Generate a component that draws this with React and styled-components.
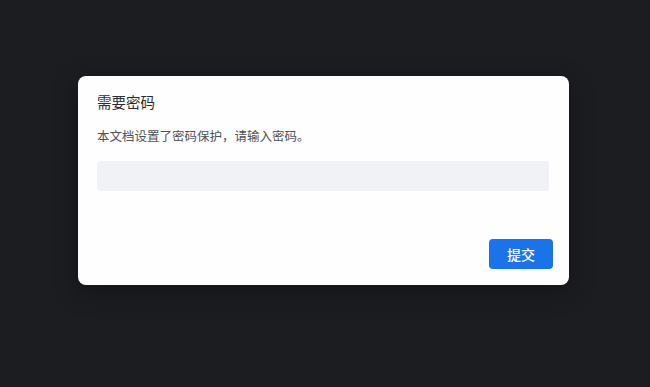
import React from "react";
import styled, { createGlobalStyle } from "styled-components";

const Global = createGlobalStyle`
  html, body { margin: 0; padding: 0; background: #1c1d21; }
  body { font-family: "Noto Sans CJK SC", "Noto Sans", sans-serif; }
`;

const Overlay = styled.div`
  width: 650px;
  height: 387px;
  background: #1c1d21;
  display: flex;
  justify-content: center;
  align-items: flex-start;
  padding-top: 76px;
  box-sizing: border-box;
`;

const Dialog = styled.div`
  width: 491px;
  height: 209px;
  margin-left: -3px;
  background: #fefefe;
  border-radius: 8px;
  box-shadow: 0 6px 24px rgba(0, 0, 0, 0.35);
  box-sizing: border-box;
  padding: 15px 16px 16px 19px;
  display: flex;
  flex-direction: column;
`;

const Title = styled.div`
  font-size: 14.5px;
  line-height: 22px;
  color: #2a2a30;
  font-weight: 400;
`;

const Desc = styled.div`
  margin-top: 13px;
  font-size: 12.5px;
  line-height: 20px;
  color: #505058;
`;

const Input = styled.input`
  margin-top: 15px;
  width: 452px;
  height: 30px;
  border: none;
  outline: none;
  border-radius: 4px;
  background: #f1f2f6;
  box-sizing: border-box;
  padding: 0 10px;
  font-size: 13px;
`;

const Footer = styled.div`
  margin-top: auto;
  display: flex;
  justify-content: flex-end;
`;

const Button = styled.button`
  width: 64px;
  height: 30px;
  border: none;
  border-radius: 4px;
  background: #1a73e8;
  color: #ffffff;
  font-family: "Noto Sans CJK SC", sans-serif;
  font-size: 14px;
  font-weight: 500;
  padding: 0;
  cursor: pointer;
`;

export default function App() {
  return (
    <>
      <Global />
      <Overlay>
        <Dialog>
          <Title>需要密码</Title>
          <Desc>本文档设置了密码保护，请输入密码。</Desc>
          <Input type="password" />
          <Footer>
            <Button>提交</Button>
          </Footer>
        </Dialog>
      </Overlay>
    </>
  );
}
